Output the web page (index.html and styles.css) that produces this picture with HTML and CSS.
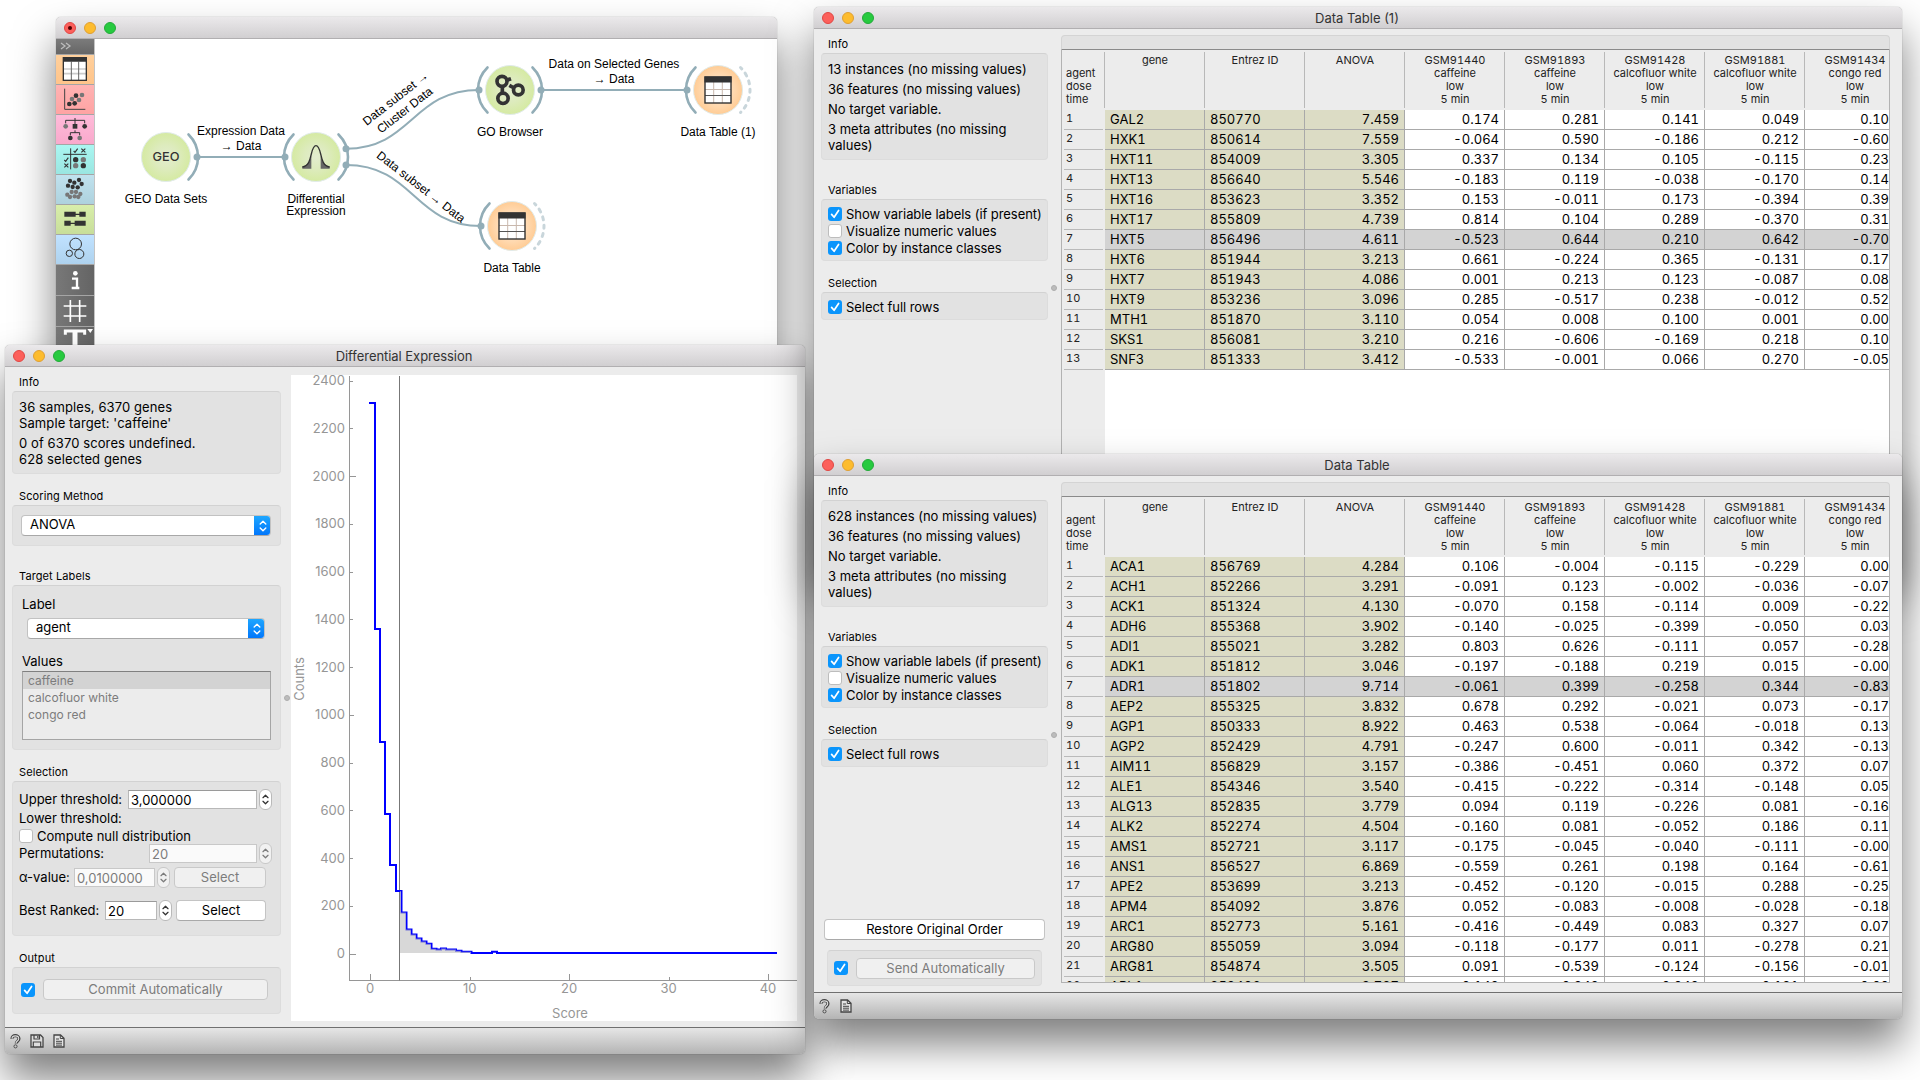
FILE: index.html
```html
<!DOCTYPE html>
<html lang="en">
<head>
<meta charset="utf-8">
<title>Differential Expression</title>
<link rel="stylesheet" href="styles.css">
</head>
<body>
<svg class="defs" width="0" height="0" aria-hidden="true">
  <defs>
    <symbol id="i-help" viewBox="0 0 12 16"><path d="M2.2 5.2C2 2.6 3.8 1.6 5.8 1.6s4 1.200 4 3.300c0 2.600-3 2.700-3 5.300" fill="none" stroke="#444" stroke-width="3.400"/><path d="M2.200 5C2.200 2.800 3.900 1.900 5.800 1.900s3.700 1.100 3.700 3c0 2.500-3 2.600-3 5" fill="none" stroke="#ddd" stroke-width="1.200"/><circle cx="6" cy="13.300" r="1.700" fill="#ccc" stroke="#444" stroke-width="1"/></symbol>
    <symbol id="i-save" viewBox="0 0 14 14"><path d="M1 1h9.500L13 3.500V13H1z" fill="#ddd" stroke="#444" stroke-width="1.300"/><path d="M4 1v4h5.500V1M7.800 2v2M3.300 13V8h7.400v5" fill="none" stroke="#444" stroke-width="1.200"/></symbol>
    <symbol id="i-doc" viewBox="0 0 12 14"><path d="M1 1h6.500L11 4.300V13H1z" fill="#e4e4e4" stroke="#444" stroke-width="1.300"/><path d="M7.300 1v3.500H11M3 5h3M3 7.300h6M3 9.200h6M3 11.100h6" fill="none" stroke="#444" stroke-width="1"/></symbol>
    <symbol id="i-check" viewBox="0 0 14 14"><path d="M3.600 7.400l2.500 2.900 4.500-6.800" fill="none" stroke="#fff" stroke-width="1.700" stroke-linecap="round" stroke-linejoin="round"/></symbol>
    <symbol id="i-updown" viewBox="0 0 10 14"><path d="M2.200 5L5 2.200 7.800 5M2.200 9L5 11.800 7.800 9" fill="none" stroke="currentColor" stroke-width="1.400" stroke-linecap="round" stroke-linejoin="round"/></symbol>
    <radialGradient id="green"><stop offset="0" stop-color="#e3edcf"/><stop offset=".5" stop-color="#ddebbd"/><stop offset="1" stop-color="#d5eaa2"/></radialGradient>
    <radialGradient id="orange"><stop offset="0" stop-color="#ffe4c8"/><stop offset=".6" stop-color="#ffdab2"/><stop offset="1" stop-color="#ffcc95"/></radialGradient>
    <g id="arc"><path d="M22.500 -22.500A31.400 31.400 0 0 1 22.500 22.500" fill="none" stroke="#92adb7" stroke-width="2.600" stroke-linecap="round"/></g>
    <g id="dash"><path d="M22.500 -22.500A31.400 31.400 0 0 1 22.500 22.500" fill="none" stroke="#c9d6db" stroke-width="3" stroke-linecap="round" stroke-dasharray="3 5.400" stroke-dashoffset="1"/></g>
    <g id="sheet"><rect x="-13" y="-13" width="26" height="26" fill="#fff"/><path d="M-4.300 -8V13M4.300 -8V13M-13 -.500H13" stroke="#c9b8ad" stroke-width="1" fill="none"/><path d="M-13 5.500H13" stroke="#555" stroke-width="1"/><rect x="-13" y="-13" width="26" height="26" fill="none" stroke="#333" stroke-width="1.400"/><rect x="-13.500" y="-13.500" width="27" height="6" fill="#333"/></g>
  </defs>
</svg>

<section class="window canvas-window">
  <header class="titlebar"><i class="light red edited"></i><i class="light yellow"></i><i class="light green"></i></header>
  <div class="window-body">
    <nav class="toolbox">
      <div class="tool-top"><svg width="12" height="8" viewBox="0 0 12 8"><path d="M1 1l4 3-4 3M6 1l4 3-4 3" fill="none" stroke="#bbb" stroke-width="1.300"/></svg></div>
      <div class="tool t-data"><svg viewBox="48 165 114 87"><rect x="70" y="173" width="69" height="68" fill="#fff"/><path d="M70 207h69M70 221h69" stroke="#ccc" stroke-width="5"/><path d="M94 185v56M116 185v56" stroke="#666" stroke-width="3"/><rect x="70" y="173" width="69" height="68" fill="none" stroke="#333" stroke-width="4"/><path d="M69 179h71" stroke="#333" stroke-width="13"/></svg></div>
      <div class="tool t-vis"><svg viewBox="48 255 114 87"><path d="M74 266v62h62" fill="none" stroke="#444" stroke-width="3"/><g fill="#333"><circle cx="88" cy="312" r="7"/><circle cx="104" cy="310" r="7"/><circle cx="108" cy="287" r="7"/></g><g fill="#777"><circle cx="96" cy="297" r="7"/><circle cx="117" cy="300" r="7"/><circle cx="126" cy="285" r="7"/></g></svg></div>
      <div class="tool t-model"><svg viewBox="48 345 114 87"><path d="M77 370v-9h57v9M105 354v20M91 406v-8h28v8M105 398v-7" fill="none" stroke="#333" stroke-width="3"/><g fill="#333"><rect x="98" y="372" width="14" height="14"/><circle cx="134" cy="379" r="7"/><circle cx="91" cy="414" r="7"/></g><g fill="#777"><circle cx="77" cy="379" r="7"/><circle cx="119" cy="414" r="7"/></g></svg></div>
      <div class="tool t-eval"><svg viewBox="48 435 114 87"><path d="M92 445v63M70 463h70" fill="none" stroke="#333" stroke-width="3"/><path d="M101 453l4 4 8-11M73 480l4 4 8-11M124 446l12 11M136 446l-12 11M73 491l12 11M85 491l-12 11" fill="none" stroke="#333" stroke-width="3.500"/><g fill="#333"><circle cx="107" cy="479" r="8"/><circle cx="130" cy="497" r="8"/></g><g fill="#777"><circle cx="130" cy="479" r="8"/><circle cx="107" cy="497" r="8"/></g></svg></div>
      <div class="tool t-unsup"><svg viewBox="48 525 114 87"><g fill="#777"><circle cx="95" cy="576" r="6.500"/><circle cx="108" cy="576" r="6.500"/><circle cx="82" cy="584" r="6.500"/><circle cx="121" cy="582" r="6.500"/><circle cx="90" cy="591" r="6.500"/><circle cx="104" cy="589" r="6.500"/><circle cx="115" cy="591" r="6.500"/></g><g fill="#333"><circle cx="90" cy="543" r="6.500"/><circle cx="103" cy="548" r="6.500"/><circle cx="117" cy="540" r="6.500"/><circle cx="125" cy="552" r="6.500"/><circle cx="84" cy="557" r="6.500"/><circle cx="98" cy="561" r="6.500"/><circle cx="113" cy="562" r="6.500"/></g></svg></div>
      <div class="tool t-bio"><svg viewBox="48 615 114 87"><path d="M73 643h34M118 643h19M73 670h19M104 670h33" stroke="#333" stroke-width="15"/><path d="M100 643h25M88 670h25" stroke="#333" stroke-width="4"/></svg></div>
      <div class="tool t-net"><svg viewBox="48 705 114 87"><g fill="none" stroke="#333" stroke-width="3"><circle cx="107" cy="732" r="17.500"/><circle cx="88" cy="760" r="9.500"/><circle cx="118" cy="762" r="13.500"/></g></svg></div>
      <div class="tool dark"><svg viewBox="48 795 114 90"><circle cx="106" cy="820" r="7" fill="#fff"/><path d="M96 836h15v27M95 864h23" stroke="#fff" stroke-width="7" fill="none"/></svg></div>
      <div class="tool dark"><svg viewBox="48 888 114 90"><path d="M91 900v66M119 900v66M71 918h68M71 948h68" stroke="#fff" stroke-width="5" fill="none"/></svg></div>
      <div class="tool dark"><svg viewBox="48 981 114 90"><path d="M76 1004v-11h58v11" stroke="#fff" stroke-width="9" fill="none"/><path d="M105 990v62" stroke="#fff" stroke-width="15"/><path d="M142 987h17l-8 12z" fill="#fff"/></svg></div>
    </nav>
    <svg class="workflow" width="682" height="440" viewBox="95 39 682 440">
      <g fill="none" stroke="#92adb7" stroke-width="2">
        <path d="M197 157H285M541 90H687"/>
        <path d="M346 148.700C412 148.700 412 90 479 90"/>
        <path d="M346 165C414 165 414 226 481 226"/>
      </g>
      <g transform="translate(166 157)"><circle class="halo" r="24.500" fill="url(#green)"/><use href="#arc"/><text class="geo" y="4.300" textLength="27" lengthAdjust="spacingAndGlyphs">GEO</text></g>
      <g transform="translate(316 157)"><circle class="halo" r="24.500" fill="url(#green)"/><use href="#arc"/><use href="#arc" transform="scale(-1 1)"/>
        <g transform="translate(-276 -157) scale(.33333)"><path d="M787 506v-6C803 497 810 482 814 468v38zM869 506v-6C853 497 846 482 842 468v38z" fill="#666"/><path d="M787 501C806 498 810 480 814 462C818 445 822 437 828 437S838 445 842 462C846 480 850 498 869 501" fill="none" stroke="#333" stroke-width="4"/></g></g>
      <g transform="translate(510 90)"><circle class="halo" r="24.500" fill="url(#green)"/><use href="#arc"/><use href="#arc" transform="scale(-1 1)"/>
        <g transform="translate(-80 -90) scale(.33333)" fill="none" stroke="#333" stroke-width="11"><circle cx="216" cy="244" r="15"/><circle cx="265" cy="270" r="14.500"/><circle cx="219" cy="295" r="15.500"/><path d="M217 260v20M229 241l14-5M238 256l14 8"/></g></g>
      <g transform="translate(718 90)"><circle class="halo" r="24.500" fill="url(#orange)"/><use href="#arc" transform="scale(-1 1)"/><use href="#dash"/><use href="#sheet"/></g>
      <g transform="translate(512 226)"><circle class="halo" r="24.500" fill="url(#orange)"/><use href="#arc" transform="scale(-1 1)"/><use href="#dash"/><use href="#sheet"/></g>
      <g fill="#92adb7"><circle cx="197" cy="157" r="3.500"/><circle cx="285" cy="157" r="3.500"/><circle cx="346" cy="148.700" r="3.500"/><circle cx="346" cy="165" r="3.500"/><circle cx="479" cy="90" r="3.500"/><circle cx="541" cy="90" r="3.500"/><circle cx="687" cy="90" r="3.500"/><circle cx="481" cy="226" r="3.500"/></g>
      <g class="node-text">
        <text x="166" y="203">GEO Data Sets</text><text x="316" y="203">Differential</text><text x="316" y="215">Expression</text>
        <text x="510" y="136">GO Browser</text><text x="718" y="136">Data Table (1)</text><text x="512" y="272">Data Table</text>
        <text x="241" y="135">Expression Data</text><text x="241" y="149.500">→ Data</text>
        <text x="614" y="68">Data on Selected Genes</text><text x="614" y="82.500">→ Data</text>
        <g transform="translate(398 101.500) rotate(-38)"><text>Data subset →</text><text y="15">Cluster Data</text></g>
        <g transform="translate(418.500 190) rotate(37.800)"><text>Data subset → Data</text></g>
      </g>
    </svg>
  </div>
</section>

<section class="window de-window">
  <header class="titlebar"><i class="light red"></i><i class="light yellow"></i><i class="light green"></i><h1>Differential Expression</h1></header>
  <div class="window-body">
    <aside class="de-side">
      <h2>Info</h2>
      <div class="group g-info"><p>36 samples, 6370 genes<br>Sample target: 'caffeine'</p><p>0 of 6370 scores undefined.<br>628 selected genes</p></div>
      <h2>Scoring Method</h2>
      <div class="group g-scoring"><div class="combo"><span>ANOVA</span><b><svg><use href="#i-updown"/></svg></b></div></div>
      <h2>Target Labels</h2>
      <div class="group g-target">
        <p>Label</p>
        <div class="combo inner"><span>agent</span><b><svg><use href="#i-updown"/></svg></b></div>
        <p class="values">Values</p>
        <ul class="list"><li class="on">caffeine</li><li>calcofluor white</li><li>congo red</li></ul>
      </div>
      <h2>Selection</h2>
      <div class="group g-selection">
        <div class="row r-upper"><span>Upper threshold:</span><span class="field">3,000000</span><i class="step"><svg><use href="#i-updown"/></svg></i></div>
        <div class="row r-lower"><span>Lower threshold:</span></div>
        <div class="row r-null"><i class="check"></i><span>Compute null distribution</span></div>
        <div class="row r-perm off"><span>Permutations:</span><span class="field">20</span><i class="step"><svg><use href="#i-updown"/></svg></i></div>
        <div class="row r-alpha off"><span>α-value:</span><span class="field">0,0100000</span><i class="step"><svg><use href="#i-updown"/></svg></i><button disabled>Select</button></div>
        <div class="row r-best"><span>Best Ranked:</span><span class="field">20</span><i class="step"><svg><use href="#i-updown"/></svg></i><button>Select</button></div>
      </div>
      <h2>Output</h2>
      <div class="group g-output"><i class="check on"><svg><use href="#i-check"/></svg></i><button disabled>Commit Automatically</button></div>
    </aside>
    <div class="splitter de-split"><i></i></div>
    <svg class="chart" width="506" height="646" viewBox="291 375 506 646">
      <g id="axes"></g>
      <path d="M349.500 376V980.500M349 980.500H797" class="axis"/>
      <path d="M399.500 376V980.500" stroke="#777" fill="none"/>
      <path class="hist" d="M369 403H375V629H380V742H385V814H390V865H396V891H401.500V912.500H406.500V929.500H411.500V934.500H416.500V938.500H421.500V941.500H426.500V943.700H431.500V948.700H436.500V949.500H441V948.500H446V949.500H456V950.700H461.500V951.700H471.500V953H492V951.700H497V953H777"/>
      <path fill="#bebebe" fill-opacity=".6" d="M400 891H401V912.500H406V929.500H411V934.500H416V938.500H421V941.500H426V943.700H431V948.700H436V949.500H441V948.500H446V949.500H456V950.700H461V951.700H471V953H400z"/>
      <text class="axis-title" x="570" y="1017.500">Score</text>
      <text class="axis-title" transform="translate(304 679) rotate(-90)">Counts</text>
    </svg>
  </div>
  <footer class="statusbar"><svg class="s-help"><use href="#i-help"/></svg><svg class="s-save"><use href="#i-save"/></svg><svg class="s-doc"><use href="#i-doc"/></svg></footer>
</section>

<section class="window table-window first">
  <header class="titlebar"><i class="light red"></i><i class="light yellow"></i><i class="light green"></i><h1>Data Table (1)</h1></header>
  <div class="window-body">
    <aside class="dt-side">
      <h2>Info</h2>
      <div class="group d-info"><p>13 instances (no missing values)</p><p>36 features (no missing values)</p><p>No target variable.</p><p>3 meta attributes (no missing<br>values)</p></div>
      <h2>Variables</h2>
      <div class="group d-vars"><label><i class="check on"><svg><use href="#i-check"/></svg></i>Show variable labels (if present)</label><label><i class="check"></i>Visualize numeric values</label><label><i class="check on"><svg><use href="#i-check"/></svg></i>Color by instance classes</label></div>
      <h2>Selection</h2>
      <div class="group d-sel"><label><i class="check on"><svg><use href="#i-check"/></svg></i>Select full rows</label></div>
    </aside>
    <div class="splitter"><i></i></div>
    <div class="grid-wrap"><div class="strip"></div><div class="grid-clip"><table class="grid" id="table-a"></table></div></div>
  </div>
</section>

<section class="window table-window second">
  <header class="titlebar"><i class="light red"></i><i class="light yellow"></i><i class="light green"></i><h1>Data Table</h1></header>
  <div class="window-body">
    <aside class="dt-side">
      <h2>Info</h2>
      <div class="group d-info"><p>628 instances (no missing values)</p><p>36 features (no missing values)</p><p>No target variable.</p><p>3 meta attributes (no missing<br>values)</p></div>
      <h2>Variables</h2>
      <div class="group d-vars"><label><i class="check on"><svg><use href="#i-check"/></svg></i>Show variable labels (if present)</label><label><i class="check"></i>Visualize numeric values</label><label><i class="check on"><svg><use href="#i-check"/></svg></i>Color by instance classes</label></div>
      <h2>Selection</h2>
      <div class="group d-sel"><label><i class="check on"><svg><use href="#i-check"/></svg></i>Select full rows</label></div>
      <button class="restore">Restore Original Order</button>
      <div class="group d-send"><i class="check on"><svg><use href="#i-check"/></svg></i><button disabled>Send Automatically</button></div>
    </aside>
    <div class="splitter"><i></i></div>
    <div class="grid-wrap"><div class="strip"></div><div class="grid-clip"><table class="grid" id="table-b"></table></div></div>
  </div>
  <footer class="statusbar"><svg class="s-help"><use href="#i-help"/></svg><svg class="s-doc"><use href="#i-doc"/></svg></footer>
</section>
<script src="script.js"></script>
</body>
</html>
```
FILE: styles.css
```css
* { box-sizing: border-box; }
body { margin: 0; width: 1920px; height: 1080px; overflow: hidden; position: relative; background: #fff; font: 13px/16px Inter, "Liberation Sans", sans-serif; color: #000; }
h1, h2, p, ul { margin: 0; padding: 0; font-weight: 400; }
i { font-style: normal; }
.defs { position: absolute; }

/* windows */
.window { position: absolute; display: flex; flex-direction: column; background: #ececec; border-radius: 5px; overflow: hidden; box-shadow: 0 0 1px rgba(0,0,0,.5), 0 25px 42px rgba(0,0,0,.5); }
.canvas-window { left: 56px; top: 17px; width: 721px; height: 500px; }
.de-window { left: 5px; top: 345px; width: 800px; height: 709px; }
.table-window { left: 814px; width: 1088px; height: 565px; }
.table-window.first { top: 7px; }
.table-window.second { top: 454px; }
.titlebar { flex: none; height: 22px; display: flex; align-items: center; gap: 8px; padding: 0 8px; background: linear-gradient(#ebe9eb, #d1cfd1); border-bottom: 1px solid #b1afb1; }
.light { width: 12px; height: 12px; border-radius: 50%; flex: none; display: grid; place-items: center; }
.red { background: #fc605b; border: 1px solid #df4744; }
.yellow { background: #fdbc2e; border: 1px solid #de9f34; }
.green { background: #27ca3f; border: 1px solid #24a93a; }
.edited::after { content: ""; width: 4px; height: 4px; border-radius: 50%; background: #4d0000; }
.titlebar h1 { flex: 1; margin-right: 62px; text-align: center; font-size: 13px; color: #333; }
.de-window h1 { letter-spacing: -.050px; }
.window-body { flex: 1; display: flex; min-height: 0; }
.statusbar { flex: none; height: 27px; display: flex; align-items: center; border-top: 1px solid #707070; background: linear-gradient(#e6e6e6, #b4b4b4); }
.s-help { width: 11px; height: 15px; margin-left: 5px; }
.s-save { width: 14px; height: 14px; margin-left: 9px; }
.s-doc { width: 12px; height: 14px; margin-left: 9px; }
.second .s-doc { margin-left: 10px; }

/* workflow canvas */
.toolbox { width: 39px; flex: none; border-right: 1px solid #c4c4c4; background: #a5a5a5; }
.tool-top { height: 15px; margin-bottom: 1px; padding: 3px 4px; line-height: 0; background: linear-gradient(#7b7b7b, #666); }
.tool { height: 29px; margin-bottom: 1px; }
.tool svg { display: block; width: 38px; height: 29px; }
.t-data { background: linear-gradient(#ffd09c, #ffc48a); }
.t-vis { background: linear-gradient(#ffb3b3, #ffa3a3); }
.t-model { background: linear-gradient(#ffbbd9, #f9a9cc); }
.t-eval { background: linear-gradient(#aaf6f1, #9ae6e1); }
.t-unsup { background: linear-gradient(#c0e2ee, #aed2de); }
.t-bio { background: linear-gradient(#d8eeaa, #c8de9a); }
.t-net { background: linear-gradient(#c0e2ff, #aed2ee); }
.tool.dark { height: 30px; background: linear-gradient(90deg, #787878, #646464); }
.tool.dark svg { height: 30px; }
.workflow { background: #fff; display: block; }
.halo { stroke: #e1ebea; stroke-width: 1; }
.node-text { font: 12px "Liberation Sans", Arial, sans-serif; text-anchor: middle; }
.geo { font: 500 12px Inter, sans-serif; text-anchor: middle; fill: #333; }

/* sidebars */
h2 { font-size: 11px; line-height: 13px; letter-spacing: .1px; padding-left: 7px; }
.group { background: #e2e2e2; border: 1px solid #dcdcdc; border-top-color: #d2d2d2; border-radius: 4px; }
.de-side { width: 269px; margin-left: 7px; flex: none; }
.de-side h2 { height: 15px; }
.de-side > h2:first-child { margin-top: 9px; }
.g-info { height: 83px; padding: 7px 6px; margin-bottom: 16px; letter-spacing: .1px; }
.g-info p { margin-bottom: 4px; }
.g-scoring { height: 41px; padding: 9px 9px 9px 8px; margin-bottom: 24px; }
.g-target { height: 165px; padding: 10px 9px; margin-bottom: 16px; }
.combo { height: 21px; display: flex; background: #fff; border: 1px solid #c2c2c2; border-bottom-color: #a8a8a8; border-radius: 4px; overflow: hidden; }
.combo span { flex: 1; padding-left: 8px; line-height: 17px; }
.combo b { width: 17px; margin: -1px; display: grid; place-items: center; color: #fff; background: linear-gradient(#1fa9ff, #0074fb); }
.combo svg { width: 10px; height: 14px; }
.combo.inner { margin: 6px 6px 0 5px; }
.values { margin-top: 14px; }
.list { list-style: none; height: 69px; margin-top: 2px; border: 1px solid #a5a5a5; border-top-color: #808080; background: #ececec; color: #7c7c7c; font-size: 12px; }
.list li { height: 17px; line-height: 17px; padding-left: 5px; }
.list .on { background: #d3d3d3; }
.g-selection { height: 155px; padding: 7px 6px; margin-bottom: 16px; }
.row { display: flex; align-items: center; height: 21px; white-space: nowrap; }
.row > span:first-child { margin-top: -1px; }
.field { height: 19px; background: #fff; border: 1px solid #b8b8b8; border-top-color: #9a9a9a; padding-left: 2px; line-height: 18px; }
.step { width: 13px; height: 21px; margin-left: 2px; border-radius: 6px; border: 1px solid #b9b9b9; background: #fff; color: #333; display: grid; place-items: center; }
.step svg { width: 9px; height: 13px; }
.off .field, .off .step { border-color: #c8c8c8; color: #7c7c7c; background: #f1f1f1; }
.off .field { background: #fafafa; }
.r-upper .field { width: 129px; margin-left: auto; }
.r-upper, .r-perm { padding-right: 2px; }
.r-lower { height: 17px; }
.r-null { height: 16px; gap: 4px; margin-top: 1px; }
.r-perm { height: 18px; }
.r-perm .field { width: 108px; margin-left: auto; }
.r-alpha { margin-top: 5px; padding-right: 8px; }
.r-alpha .field { width: 81px; margin-left: auto; }
.r-best { margin-top: 12px; padding-right: 8px; }
.r-best .field { width: 52px; margin-left: auto; }
button { height: 21px; padding: 0 0 1px; font: inherit; line-height: 16px; color: #000; background: #fff; border: 1px solid #c4c4c4; border-bottom-color: #a9a9a9; border-radius: 4px; }
button:disabled { color: #7c7c7c; background: #f0f0f0; border-color: #c9c9c9; }
.r-alpha button { width: 92px; margin-left: 4px; }
.r-best button { width: 90px; margin-left: 4px; }
.check { width: 14px; height: 14px; flex: none; border-radius: 3px; background: #fff; border: 1px solid #bdbdbd; display: block; }
.check.on { background: #0a95fc; border: 0; }
.check svg { display: block; width: 14px; height: 14px; }
.g-output { height: 47px; display: flex; align-items: center; padding: 0 12px 2px 8px; gap: 8px; }
.g-output button { flex: 1; }
.splitter { width: 13px; flex: none; display: grid; justify-items: center; align-content: start; padding: 256px 1px 0 0; }
.splitter i { width: 6px; height: 6px; border-radius: 50%; background: #bcbcbc; border: 1px solid #adadad; }
.de-split { width: 10px; padding: 328px 0 0 1px; }

/* histogram */
.chart { margin-top: 8px; background: #fff; }
.axis { stroke: #969696; fill: none; }
.hist { stroke: #00f; stroke-width: 2; fill: none; }
.axis-title, .tick-label { font: 13px Inter, sans-serif; fill: #969696; }
.axis-title { text-anchor: middle; }
.tick-y { text-anchor: end; }
.tick-x { text-anchor: middle; }

/* data tables */
.dt-side { width: 227px; margin-left: 7px; flex: none; display: flex; flex-direction: column; }
.dt-side h2 { height: 15px; }
.dt-side > h2:first-child { margin-top: 9px; }
.d-info { height: 107px; padding: 7px 6px; margin-bottom: 24px; letter-spacing: 0; }
.d-info p { margin-bottom: 4px; }
.d-vars { height: 62px; padding: 5px 6px; margin-bottom: 16px; }
.d-sel { height: 28px; padding: 5px 6px; }
.dt-side label { display: flex; align-items: center; gap: 4px; height: 17px; white-space: nowrap; letter-spacing: -.060px; }
.restore { width: 221px; margin: auto 0 10px 3px; }
.d-send { width: 215px; height: 36px; margin: 0 0 6px 6px; display: flex; align-items: center; gap: 8px; padding: 0 6px; }
.d-send button { flex: 1; }
.grid-wrap { width: 829px; margin-top: 6px; display: flex; flex-direction: column; min-height: 0; }
.strip { height: 15px; flex: none; background: #e2e2e2; border: 1px solid #d4d4d4; border-bottom: 1px solid #8a8a8a; border-radius: 4px 4px 0 0; }
.grid-clip { flex: 1; min-height: 0; overflow: hidden; border: 1px solid #b2b2b2; border-top: 0; background: linear-gradient(90deg, #ececec 43px, #fff 43px); }
.second .grid-clip { flex: none; height: 486px; }
.grid { table-layout: fixed; width: 827px; border-collapse: separate; border-spacing: 0; font-variant-numeric: tabular-nums; }
.grid th, .grid td { padding: 0; font-weight: 400; white-space: nowrap; }
.grid thead th { width: 100px; height: 60px; padding-top: 4px; vertical-align: top; text-align: center; font-size: 11px; line-height: 13px; color: #222; background: linear-gradient(#b8b8b8, #b8b8b8) right 2px / 1px 56px no-repeat #ececec; }
.grid thead th:last-child { width: 84px; padding-left: 16px; background: #ececec; }
.grid thead th.corner { width: 43px; padding: 17px 0 0 4px; text-align: left; background-position: right 2px; }
.grid tbody th { height: 20px; padding-left: 4px; text-align: left; font-size: 11px; line-height: 17px; vertical-align: top; color: #222; background: linear-gradient(#bababa, #bababa) 2px bottom / 39px 1px no-repeat #ececec; }
.grid td { height: 20px; line-height: 19px; padding: 0 5px; text-align: right; background: #fff; border-right: 1px solid #a9a9a9; border-bottom: 1px solid #a9a9a9; }
.grid td:last-child { padding: 0; border-right: 0; }
.grid td.meta { background: #dcdcc5; }
.grid td.left { text-align: left; }
.grid tr.on td { background: #d3d3d3; }
```
FILE: script.js
```js
const heads = [
  ["gene"], ["Entrez ID"], ["ANOVA"],
  ["GSM91440", "caffeine", "low", "5 min"],
  ["GSM91893", "caffeine", "low", "5 min"],
  ["GSM91428", "calcofluor white", "low", "5 min"],
  ["GSM91881", "calcofluor white", "low", "5 min"],
  ["GSM91434", "congo red", "low", "5 min"]
];

const genesA = `GAL2 850770 7.459 0.174 0.281 0.141 0.049 0.10
HXK1 850614 7.559 -0.064 0.590 -0.186 0.212 -0.60
HXT11 854009 3.305 0.337 0.134 0.105 -0.115 0.23
HXT13 856640 5.546 -0.183 0.119 -0.038 -0.170 0.14
HXT16 853623 3.352 0.153 -0.011 0.173 -0.394 0.39
HXT17 855809 4.739 0.814 0.104 0.289 -0.370 0.31
HXT5 856496 4.611 -0.523 0.644 0.210 0.642 -0.70
HXT6 851944 3.213 0.661 -0.224 0.365 -0.131 0.17
HXT7 851943 4.086 0.001 0.213 0.123 -0.087 0.08
HXT9 853236 3.096 0.285 -0.517 0.238 -0.012 0.52
MTH1 851870 3.110 0.054 0.008 0.100 0.001 0.00
SKS1 856081 3.210 0.216 -0.606 -0.169 0.218 0.10
SNF3 851333 3.412 -0.533 -0.001 0.066 0.270 -0.05`;

const genesB = `ACA1 856769 4.284 0.106 -0.004 -0.115 -0.229 0.00
ACH1 852266 3.291 -0.091 0.123 -0.002 -0.036 -0.07
ACK1 851324 4.130 -0.070 0.158 -0.114 0.009 -0.22
ADH6 855368 3.902 -0.140 -0.025 -0.399 -0.050 0.03
ADI1 855021 3.282 0.803 0.626 -0.111 0.057 -0.28
ADK1 851812 3.046 -0.197 -0.188 0.219 0.015 -0.00
ADR1 851802 9.714 -0.061 0.399 -0.258 0.344 -0.83
AEP2 855325 3.832 0.678 0.292 -0.021 0.073 -0.17
AGP1 850333 8.922 0.463 0.538 -0.064 -0.018 0.13
AGP2 852429 4.791 -0.247 0.600 -0.011 0.342 -0.13
AIM11 856829 3.157 -0.386 -0.451 0.060 0.372 0.07
ALE1 854346 3.540 -0.415 -0.222 -0.314 -0.148 0.05
ALG13 852835 3.779 0.094 0.119 -0.226 0.081 -0.16
ALK2 852274 4.504 -0.160 0.081 -0.052 0.186 0.11
AMS1 852721 3.117 -0.175 -0.045 -0.040 -0.111 -0.00
ANS1 856527 6.869 -0.559 0.261 0.198 0.164 -0.61
APE2 853699 3.213 -0.452 -0.120 -0.015 0.288 -0.25
APM4 854092 3.876 0.052 -0.083 -0.008 -0.028 -0.18
ARC1 852773 5.161 -0.416 -0.449 0.083 0.327 0.07
ARG80 855059 3.094 -0.118 -0.177 0.011 -0.278 0.21
ARG81 854874 3.505 0.091 -0.539 -0.124 -0.156 -0.01
ARL1 852406 3.727 0.142 0.242 0.042 0.131 0.00`;

function fill(id, source) {
  const head = "<thead><tr><th class='corner'>agent<br>dose<br>time</th>" +
    heads.map(h => `<th>${h.join("<br>")}</th>`).join("") + "</tr></thead>";
  const body = source.split("\n").map((line, r) => {
    const cells = line.split(" ").map((v, c) =>
      `<td class="${c < 3 ? "meta" : ""}${c < 2 ? " left" : ""}">${v}</td>`).join("");
    return `<tr class="${r === 6 ? "on" : ""}"><th>${r + 1}</th>${cells}</tr>`;
  }).join("");
  document.getElementById(id).innerHTML = head + "<tbody>" + body + "</tbody>";
}
fill("table-a", genesA);
fill("table-b", genesB);

let axes = "";
for (let v = 0; v <= 2400; v += 200) {
  const y = 953.5 - v * 0.23875;
  const len = v % 2000 === 0 ? 6 : v === 1000 ? 4 : 3;
  axes += `<path class="axis" d="M350 ${Math.round(y) + 0.5}h${len}"/>` +
    `<text class="tick-label tick-y" x="345" y="${y + 4.500}">${v}</text>`;
}
for (let v = 0; v <= 40; v += 10) {
  const x = 370.2 + v * 9.945;
  axes += `<path class="axis" d="M${Math.round(x) + 0.5} 980v-${v % 20 === 0 ? 6 : 3}"/>` +
    `<text class="tick-label tick-x" x="${x}" y="993">${v}</text>`;
}
document.getElementById("axes").innerHTML = axes;
```
